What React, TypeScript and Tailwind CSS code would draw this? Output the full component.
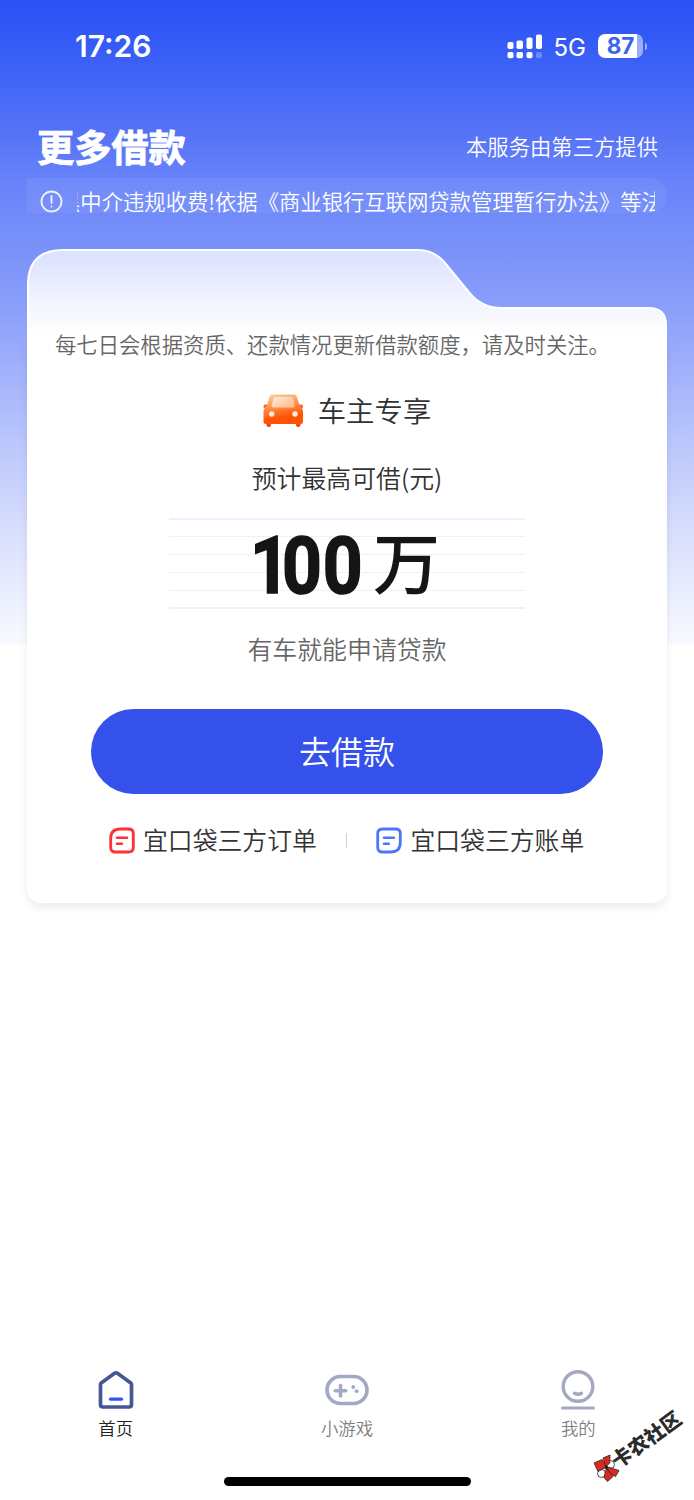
import React from 'react';

const NOTICE = '黑中介违规收费!依据《商业银行互联网贷款管理暂行办法》等法';

function SignalIcon() {
  return (
    <svg width="36" height="25" viewBox="0 0 36 25" fill="#fff">
      <rect x="0.5" y="8" width="6" height="7" rx="1.8" />
      <rect x="9.5" y="6.5" width="6.5" height="8.5" rx="1.8" />
      <rect x="19.5" y="3.5" width="6" height="11.5" rx="1.8" />
      <rect x="29" y="0.5" width="6" height="14.5" rx="1.8" />
      <rect x="0.5" y="18" width="6" height="6.3" rx="1.8" />
      <rect x="9.5" y="18" width="6.5" height="6.3" rx="1.8" />
      <rect x="19.5" y="18" width="6" height="6.3" rx="1.8" />
      <rect x="29" y="18" width="6" height="6.3" rx="1.8" opacity="0.25" />
    </svg>
  );
}

function StatusBar() {
  return (
    <div className="flex h-[92px] items-center justify-between pr-[47px] pl-[75px] text-white">
      <span className="font-[Inter] text-[30px] font-semibold">17:26</span>
      <div className="flex items-center">
        <SignalIcon />
        <span className="mt-[3px] ml-[11px] font-[Inter] text-[24px] leading-6 font-normal">5G</span>
        <div className="ml-[12px] flex h-6 w-[45px] items-center justify-center rounded-[7px] bg-linear-to-r from-white from-87% to-white/50 to-87%">
          <span className="font-[Inter] text-[22.500px] leading-6 font-bold text-[#3c62f0]">87</span>
        </div>
        <div className="ml-[2px] h-[7px] w-[2px] rounded-r-full bg-white/50" />
      </div>
    </div>
  );
}

function CarIcon() {
  return (
    <svg className="mt-[2px]" width="40" height="34" viewBox="0 0 40 34">
      <defs>
        <linearGradient id="car" x1="0" y1="0" x2="0.25" y2="1">
          <stop offset="0" stopColor="#ffd0a0" />
          <stop offset="0.45" stopColor="#ff9350" />
          <stop offset="0.85" stopColor="#ff5206" />
        </linearGradient>
        <linearGradient id="glass" x1="0" y1="0" x2="1" y2="1">
          <stop offset="0" stopColor="#ffecdc" />
          <stop offset="1" stopColor="#ffb787" />
        </linearGradient>
      </defs>
      <rect x="3.500" y="27" width="4.500" height="6" rx="2" fill="#f1470a" />
      <rect x="33" y="27" width="4.500" height="6" rx="2" fill="#f1470a" />
      <rect x="0.500" y="10.500" width="7" height="4" rx="1.800" fill="#fb6428" />
      <rect x="33" y="10.500" width="7" height="4" rx="1.800" fill="#fb6428" />
      <path d="M9.500 0.500H31Q33.300 0.500 33.900 2.800L36.500 11.500Q40 14 40 18V27.500Q40 30 37.500 30H3Q0.500 30 0.500 27.500V18Q0.500 14 4 11.500L6.600 2.800Q7.200 0.500 9.500 0.500Z" fill="url(#car)" />
      <path d="M12.500 3H28Q29.800 3 30.200 5L31.900 11.500Q32.200 13.600 30.200 13.600H10.300Q8.300 13.600 8.600 11.500L10.300 5Q10.700 3 12.500 3Z" fill="url(#glass)" />
      <circle cx="8.700" cy="20" r="2.700" fill="#ffe9db" />
      <circle cx="32" cy="20" r="2.700" fill="#ffe9db" />
    </svg>
  );
}

function BillIcon({ color, flip }: { color: string; flip?: boolean }) {
  return (
    <svg width="26" height="27" viewBox="0 0 26 27" fill="none" stroke={color} strokeWidth="2.800" strokeLinecap="round">
      <path
        d={
          flip
            ? 'M6.500 2H19.500Q24.300 2 24.300 6.500V15.500Q24.300 25 14.500 25H6.500Q1.700 25 1.700 20.500V6.500Q1.700 2 6.500 2Z'
            : 'M11.500 2H19.500Q24.300 2 24.300 6.500V20.500Q24.300 25 19.500 25H6.500Q1.700 25 1.700 20.500V11.500Q1.700 2 11.500 2Z'
        }
      />
      <path d="M8 10.800H18M8 16.800H12.800" strokeWidth="2.500" />
    </svg>
  );
}

// Folder-shaped top of the loan card
function CardHead() {
  return (
    <svg className="absolute top-0 left-0" width="640" height="90" viewBox="0 0 640 90" fill="none">
      <defs>
        <linearGradient id="head" x1="0" y1="0" x2="0" y2="84" gradientUnits="userSpaceOnUse">
          <stop offset="0" stopColor="#dae0ff" />
          <stop offset="1" stopColor="#fff" />
        </linearGradient>
      </defs>
      <path
        d="M1 91V36Q1 1 36 1H391C402 1 410 5 417 12.700L443 44.500C450 53 459 59 474 59H622Q639 59 639 76V91Z"
        fill="url(#head)"
        stroke="#fff"
        strokeWidth="2"
      />
    </svg>
  );
}

function LoanCard() {
  return (
    <section className="relative mx-[27px] mt-9 h-[654px]">
      <div className="absolute inset-x-0 top-[88px] bottom-0 rounded-b-[14px] bg-white shadow-[0_5px_8px_rgba(0,0,0,0.07)]" />
      <CardHead />
      <div className="relative flex flex-col items-center pt-20 text-[#333]">
        <p className="h-[30px] w-full pl-7 text-[21.350px] leading-[30px] text-[#666]">
          每七日会根据资质、还款情况更新借款额度，请及时关注。
        </p>
        <div className="mt-[26px] flex h-[50px] items-center gap-[15px]">
          <CarIcon />
          <span className="text-[28.400px]">车主专享</span>
        </div>
        <div className="mt-[27px] h-[30px] text-[24.900px] leading-[30px]">预计最高可借(元)</div>
        <div className="relative mt-[26px] flex h-[91px] w-[356px] flex-col justify-between">
          {[0, 1, 2, 3, 4, 5].map(i => (
            <div key={i} className="h-[1.500px] bg-[#edf0ff]" />
          ))}
          <div className="absolute inset-0 flex items-center text-[#151515]">
            <div className="mt-[6px] ml-[81px] flex w-[113px] origin-left scale-x-[0.88] font-[Roboto] text-[79px] leading-none font-bold whitespace-nowrap [-webkit-text-stroke:1.600px_#151515]">
              <span className="-mr-[9px]">1</span>
              <span className="tracking-[1px]">00</span>
            </div>
            <span className="-mt-[8px] ml-[10px] text-[67px] leading-none font-medium">万</span>
          </div>
        </div>
        <div className="mt-[24px] h-[30px] text-[24.900px] leading-[30px] text-[#666]">有车就能申请贷款</div>
        <button className="mt-[46px] h-[85px] w-[512px] rounded-full bg-[#3452eb] pb-[4px] text-[32px] text-white">去借款</button>
        <div className="mt-[31px] flex h-[30px] w-full items-center pl-[82px] text-[24.850px]">
          <BillIcon color="#fd3033" />
          <span className="ml-[8px]">宜口袋三方订单</span>
          <div className="mr-[29px] ml-[29px] h-[15px] w-[1.500px] bg-[#d0d0d0]" />
          <BillIcon color="#4b76fb" flip />
          <span className="ml-[8px]">宜口袋三方账单</span>
        </div>
      </div>
    </section>
  );
}

function HomeIcon() {
  return (
    <svg width="44" height="42" viewBox="0 0 44 42" fill="none" strokeLinecap="round" strokeLinejoin="round">
      <path d="M6.500 14.500Q6.500 13.500 7.500 12.700L20.600 3.300Q22 2.300 23.400 3.300L36.500 12.700Q37.500 13.500 37.500 14.500V34.500Q37.500 37 35 37H9Q6.500 37 6.500 34.500Z" stroke="#475793" strokeWidth="3.700" />
      <path d="M16.500 29.200H27.500" stroke="#2b55f6" strokeWidth="3.200" />
    </svg>
  );
}

function GameIcon() {
  return (
    <svg width="44" height="42" viewBox="0 0 44 42" fill="none" stroke="#a3a9c4" strokeLinecap="round">
      <rect x="2" y="6.500" width="40" height="27" rx="13.500" strokeWidth="3.700" />
      <path d="M15.500 15.500V26M10.200 20.700H20.800" strokeWidth="3.600" />
      <circle cx="28.200" cy="17" r="1.900" fill="#a3a9c4" stroke="none" />
      <circle cx="31.600" cy="21.200" r="1.900" fill="#a3a9c4" stroke="none" />
    </svg>
  );
}

function MineIcon() {
  return (
    <svg width="44" height="42" viewBox="0 0 44 42" fill="none" stroke="#a3a9c4" strokeWidth="3.400" strokeLinecap="round">
      <circle cx="22" cy="16.500" r="14.800" />
      <path d="M18.500 23.300Q22 25.300 25.500 23.300" />
      <path d="M6.500 38H37.500" strokeWidth="3" />
    </svg>
  );
}

function TabBar() {
  return (
    <nav className="grid grid-cols-3 text-[17.400px] leading-[22px] text-[#808080]">
      <div className="flex flex-col items-center gap-[5px] text-[#222]">
        <HomeIcon />
        首页
      </div>
      <div className="flex flex-col items-center gap-[5px]">
        <GameIcon />
        小游戏
      </div>
      <div className="flex flex-col items-center gap-[5px]">
        <MineIcon />
        我的
      </div>
    </nav>
  );
}

function Watermark() {
  return (
    <div className="absolute top-[1408px] left-[593px] h-[74px] w-[93px]">
      <svg className="absolute bottom-0 left-0" width="27" height="28" viewBox="0 0 27 28" stroke="#222" strokeWidth="0.800">
        <circle cx="17.500" cy="10.500" r="4" fill="#fff" />
        <circle cx="8.500" cy="19.500" r="4" fill="#fff" />
        <path d="M1 9L9 5.500L13.500 13L5 17.500Z" fill="#dc2a20" />
        <path d="M10 4L17 1L16.800 9L13 12.500Z" fill="#dc2a20" />
        <path d="M13 12.500L26 16.500L22.500 22.500L14.500 18Z" fill="#dc2a20" />
        <path d="M13.500 14L20 22.500L14.500 27.500L11 23.500Z" fill="#dc2a20" />
        <circle cx="13.300" cy="13.500" r="1.400" fill="#222" />
      </svg>
      <span className="absolute top-[19px] left-[13px] -rotate-[36deg] text-[20px] leading-6 font-black whitespace-nowrap text-[#2b2b2b]">
        卡农社区
      </span>
    </div>
  );
}

export default function App() {
  return (
    <div className="relative flex h-[1500px] w-[694px] flex-col overflow-hidden bg-white font-['Noto_Sans_CJK_SC',sans-serif] font-[350]">
      <div className="absolute inset-x-0 top-0 h-[645px] bg-[linear-gradient(180deg,#2c50f4_0px,#3056f5_25px,#3f64f8_75px,#5673f6_135px,#6883f9_180px,#7790f9_240px,#8b9ffb_310px,#a3b2fb_375px,#bdc8fc_450px,#dce2fd_545px,#f9faff_645px)]" />
      <div className="relative flex flex-1 flex-col">
        <StatusBar />
        <header className="mt-7 flex h-[58px] items-center justify-between pr-9 pl-[37px] text-white">
          <h1 className="mb-[5px] text-[37.200px] font-bold [-webkit-text-stroke:0.8px_white]">更多借款</h1>
          <span className="mb-[6px] text-[21.330px]">本服务由第三方提供</span>
        </header>
        <div className="mx-[27px] flex h-[35px] rounded-r-full bg-white/6 pr-[12px] pl-[13px] text-white">
          <svg className="mt-[12px] h-[23px] w-[23px]" viewBox="0 0 23 23" fill="none" stroke="#fff" strokeOpacity="0.85" strokeWidth="1.900" strokeLinecap="round">
            <circle cx="11.500" cy="11.500" r="10" />
            <path d="M11.500 6V13M11.500 16.500V16.600" />
          </svg>
          <div className="ml-[14px] h-[35px] flex-1 overflow-hidden">
            <div className="-ml-[18px] text-[21.330px] leading-[46px] whitespace-nowrap">{NOTICE}</div>
          </div>
        </div>
        <LoanCard />
        <div className="mt-auto">
          <TabBar />
          <div className="mx-auto mt-[38px] mb-[14px] h-[9px] w-[247px] rounded-full bg-black" />
        </div>
      </div>
      <Watermark />
    </div>
  );
}
